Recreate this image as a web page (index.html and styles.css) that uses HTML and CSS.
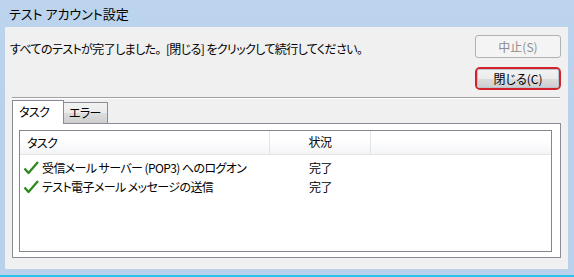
FILE: index.html
```html
<!DOCTYPE html>
<html lang="ja">
<head>
    <meta charset="UTF-8">
    <title>テスト アカウント設定</title>
    <link rel="stylesheet" href="styles.css">
</head>
<body>

<div class="window">
    <div class="titlebar">テスト アカウント設定</div>
    <div class="client">
        <div class="top">
            <p class="message">すべてのテストが完了しました<span class="full">。</span>[閉じる] をクリックして続行してください。</p>
            <div class="buttons">
                <button class="btn" disabled>中止(S)</button>
                <div class="focus-ring">
                    <button class="btn">閉じる(C)</button>
                </div>
            </div>
        </div>
        <div class="separator"></div>

        <div class="tabs">
            <div class="tab active">タスク</div>
            <div class="tab">エラー</div>
        </div>
        <div class="panel">
            <div class="listview">
                <div class="row header">
                    <div class="col name">タスク</div>
                    <div class="col status">状況</div>
                    <div class="col rest"></div>
                </div>
                <div class="rows">
                    <div class="row">
                        <div class="col name">
                            <svg class="check" width="16" height="14" viewBox="0 0 16 14"><path d="M1.5 7.5 L5.5 12 L15 1" fill="none" stroke="#2d8a1e" stroke-width="2.3" stroke-linejoin="round"/></svg>
                            受信メール サーバー (POP3) へのログオン
                        </div>
                        <div class="col status">完了</div>
                    </div>
                    <div class="row">
                        <div class="col name">
                            <svg class="check" width="16" height="14" viewBox="0 0 16 14"><path d="M1.5 7.5 L5.5 12 L15 1" fill="none" stroke="#2d8a1e" stroke-width="2.3" stroke-linejoin="round"/></svg>
                            テスト電子メール メッセージの送信
                        </div>
                        <div class="col status">完了</div>
                    </div>
                </div>
            </div>
        </div>
    </div>
    <div class="bottom-edge"></div>
</div>

</body>
</html>
```

FILE: styles.css
```css
body {
    margin: 0;
    font-family: "Noto Sans CJK JP", "Noto Sans", sans-serif;
    font-size: 12px;
    color: #000;
    font-feature-settings: "palt";
    letter-spacing: -0.6px;
}

.window {
    width: 574px;
    height: 277px;
    background: linear-gradient(#bcd4ed, #b9d1ea 40%, #b9d1ea);
    display: flex;
    flex-direction: column;
    overflow: hidden;
}

.titlebar {
    height: 27px;
    line-height: 27px;
    padding-left: 9px;
    font-size: 13px;
    letter-spacing: 0;
    color: #000;
}

.client {
    margin: 0 6px 0 5px;
    height: 242px;
    background: #f0f0f0;
    display: flex;
    flex-direction: column;
}

.top {
    display: flex;
    justify-content: space-between;
    padding: 8px 7px 0 5px;
}

.message {
    margin: 7px 0 0 0;
    line-height: 14px;
}

.message .full {
    font-feature-settings: normal;
    margin-right: -1px;
}

.buttons {
    display: flex;
    flex-direction: column;
    gap: 9px;
    width: 86px;
}

.btn {
    font-family: inherit;
    font-size: 12px;
    letter-spacing: 0;
    height: 23px;
    width: 86px;
    border: 1px solid #707070;
    border-radius: 3px;
    background: linear-gradient(#f2f2f2, #ebebeb 50%, #dddddd 51%, #cfcfcf);
    color: #000;
    padding: 0;
    font-feature-settings: "palt";
}

.btn:disabled {
    border-color: #adb2b5;
    background: #f4f4f4;
    color: #8d8d8d;
}

.focus-ring {
    border: 2px solid #d3222c;
    border-radius: 5px;
    height: 23px;
    box-sizing: border-box;
    display: flex;
}

.focus-ring .btn {
    height: 19px;
    width: 82px;
    border-color: #b8c4cf;
    border-radius: 2px;
    line-height: 15px;
}

.separator {
    margin: 7px 8px 0 7px;
    border-top: 1px solid #a0a0a0;
    border-bottom: 1px solid #ffffff;
}

.tabs {
    display: flex;
    align-items: flex-end;
    margin: 2px 0 0 7px;
    height: 23px;
    position: relative;
    z-index: 1;
}

.tab {
    height: 20px;
    line-height: 20px;
    padding: 0 0 0 6px;
    width: 38px;
    border: 1px solid #898c95;
    border-bottom: none;
    background: linear-gradient(#f2f2f2, #ebebeb 50%, #dddddd 51%, #cfcfcf);
    margin-left: -1px;
}

.tab.active {
    height: 23px;
    line-height: 22px;
    width: 44px;
    background: #ffffff;
    margin-left: 0;
    z-index: 2;
    position: relative;
}

.tabs .tab:not(.active) {
    margin-bottom: 1px;
    border-left: none;
}

.panel {
    margin: -1px 7px 0 7px;
    height: 135px;
    box-sizing: border-box;
    border: 1px solid #898c95;
    background: #ffffff;
    padding: 6px 8px 5px 6px;
}

.listview {
    height: 100%;
    box-sizing: border-box;
    border: 1px solid #828790;
    background: #ffffff;
}

.row {
    display: flex;
    height: 19px;
    line-height: 19px;
}

.row.header {
    height: 24px;
    line-height: 22px;
    background: linear-gradient(#ffffff, #ffffff 40%, #f3f4f6);
    border-bottom: 1px solid #e5e5e5;
    box-sizing: border-box;
}

.header .col {
    border-right: 1px solid #e3e4e6;
    height: 23px;
}

.col.name {
    width: 250px;
    box-sizing: border-box;
    padding-left: 3px;
    display: flex;
    align-items: center;
    white-space: nowrap;
}

.header .col.name {
    padding-left: 7px;
}

.col.status {
    width: 101px;
    box-sizing: border-box;
    text-align: center;
}

.header .col.rest {
    flex: 1;
    border-right: none;
}

.rows {
    padding-top: 3px;
}

.check {
    margin-right: 3px;
    flex: none;
}

.bottom-edge {
    margin-top: auto;
    height: 2px;
    background: #29c3ea;
}
```
